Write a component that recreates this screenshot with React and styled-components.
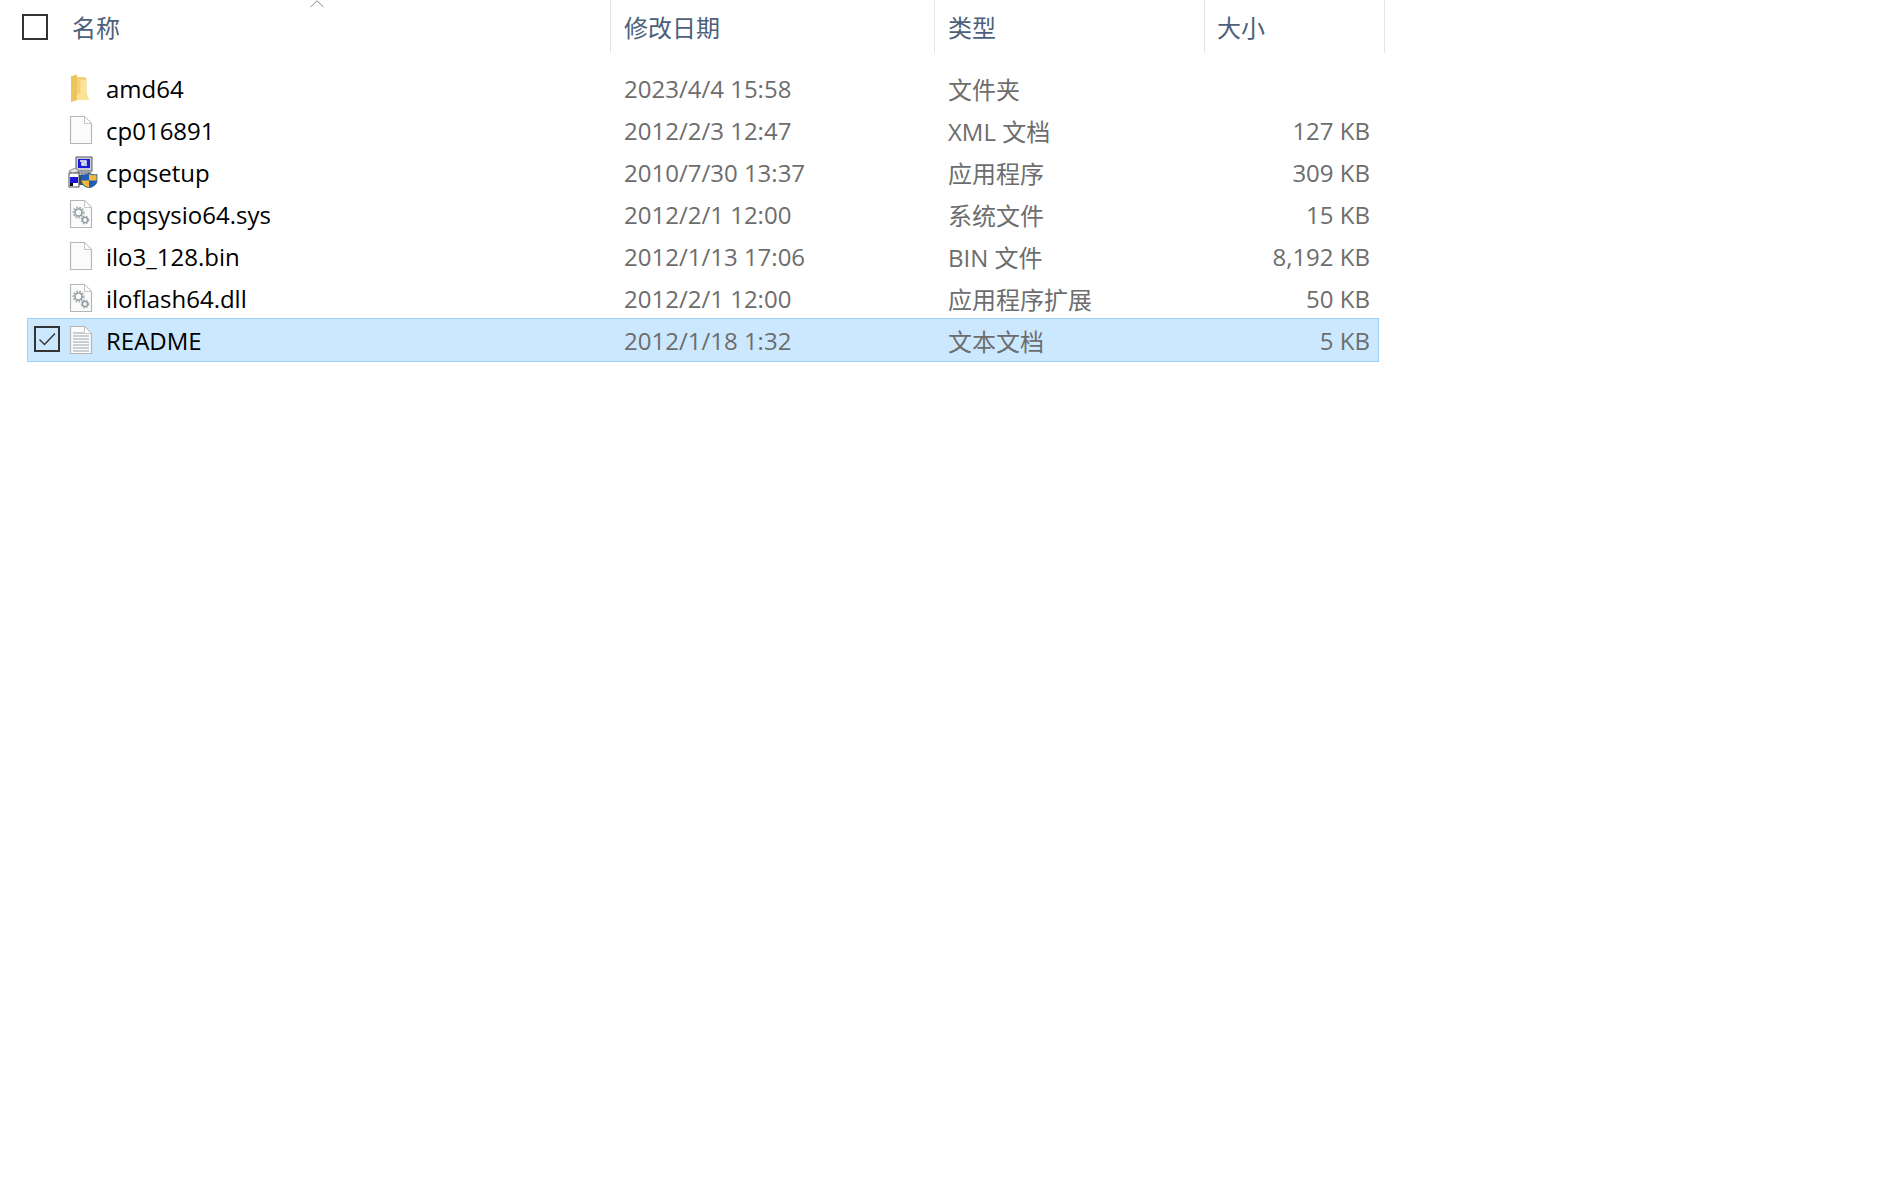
import React from "react";
import styled, { createGlobalStyle } from "styled-components";

const GlobalStyle = createGlobalStyle`
  html, body {
    margin: 0;
    padding: 0;
    background: #fff;
  }
  body {
    font-family: "Open Sans", "Noto Sans CJK SC", sans-serif;
    -webkit-font-smoothing: subpixel-antialiased;
  }
`;

const COLUMNS = "583px 324px 270px 173px";

const Page = styled.div`
  width: 1878px;
  height: 1186px;
  overflow: hidden;
  background: #fff;
`;

const Header = styled.div`
  position: relative;
  display: grid;
  grid-template-columns: 611px 324px 270px 180px;
  width: 1385px;
  height: 54px;
`;

const HeadCell = styled.div`
  display: flex;
  align-items: center;
  gap: ${(props) => props.$gap || 0}px;
  height: 53px;
  padding-left: ${(props) => props.$pad}px;
  box-sizing: border-box;
  border-right: 1px solid #e5e5e5;
  font-family: "Noto Sans CJK SC", sans-serif;
  font-size: 24px;
  color: #4c607a;
  &:first-child {
    border-right: 1px solid #e5e5e5;
  }
`;

const HeadBox = styled.span`
  display: block;
  width: 26px;
  height: 26px;
  box-sizing: border-box;
  border: 2px solid #333;
`;

const SortCaret = styled.svg`
  position: absolute;
  left: 310px;
  top: 0;
`;

const List = styled.div`
  margin: 13px 0 0 28px;
  width: 1350px;
`;

const Row = styled.div`
  position: relative;
  display: grid;
  grid-template-columns: ${COLUMNS};
  align-items: center;
  height: 42px;
  font-size: 24px;
  background: ${(props) => (props.$selected ? "#cce8ff" : "transparent")};
  outline: ${(props) => (props.$selected ? "1px solid #99d1ff" : "none")};
`;

const NameCell = styled.div`
  display: flex;
  align-items: center;
  color: #000;
  padding-left: 78px;
  height: 100%;
`;

const IconSlot = styled.span`
  position: absolute;
  left: ${(props) => props.$left}px;
  top: 0;
  height: 42px;
  display: flex;
  align-items: center;
`;

const Cell = styled.div`
  color: #6d6d6d;
  padding-left: 13px;
  white-space: nowrap;
`;

const TypeCell = styled(Cell)`
  font-family: "Open Sans", "Noto Sans CJK SC", sans-serif;
`;

const SizeCell = styled(Cell)`
  text-align: right;
  padding: 0 8px 0 0;
`;

const RowCheck = styled.span`
  position: absolute;
  left: 6px;
  top: 7px;
  width: 26px;
  height: 26px;
  box-sizing: border-box;
  border: 2px solid #333;
  display: flex;
  align-items: center;
  justify-content: center;
`;

const FolderIcon = () => (
  <svg width="24" height="30" viewBox="0 0 24 30">
    <path d="M3 3.5 L9 1.5 V4 H17 L18.5 6 V20 L21 27 H9 L3 29 Z" fill="#f3d377" />
    <path d="M9 1.5 L3 3.5 V29 L9 27 Z" fill="#eec45c" />
    <path d="M9 21 L12.5 21 V7 H18 V21 L21 27 H9 Z" fill="#fbe395" />
  </svg>
);

const DocShape = ({ children }) => (
  <svg width="24" height="30" viewBox="0 0 24 30">
    <path
      d="M1.5 1.5 H15.5 L22.5 8.5 V28.5 H1.5 Z"
      fill="#fafbfb"
      stroke="#b6b6b6"
      strokeWidth="1.2"
    />
    <path d="M15.5 1.5 V8.5 H22.5 Z" fill="#fff" stroke="#c4c4c4" strokeWidth="1" />
    {children}
  </svg>
);

const Gear = ({ x, y, r }) => (
  <g>
    <circle
      cx={x}
      cy={y}
      r={r}
      fill="none"
      stroke="#a4acb2"
      strokeWidth={r * 0.75}
      strokeDasharray="1.6 1"
      opacity="0.9"
    />
    <circle cx={x} cy={y} r={r * 0.8} fill="none" stroke="#8e979d" strokeWidth="1.2" />
    <circle cx={x} cy={y} r={r * 0.28} fill="#fff" />
  </g>
);

const GearDoc = () => (
  <DocShape>
    <Gear x={9.5} y={13.5} r={4.4} />
    <Gear x={16} y={21} r={3.2} />
  </DocShape>
);

const TextDoc = () => (
  <DocShape>
    {[8, 11, 14, 17, 20, 23, 26].map((y) => (
      <path key={y} d={`M4 ${y} H${y < 10 ? 15 : 20}`} stroke="#9ea3a8" strokeWidth="1" />
    ))}
  </DocShape>
);

const SetupIcon = () => (
  <svg width="32" height="32" viewBox="0 0 32 32">
    <rect x="10" y="1" width="16" height="14" fill="#c9ccd2" stroke="#5a5f68" strokeWidth="1" />
    <rect x="12" y="3" width="12" height="9" fill="#1b1bd6" />
    <path d="M14 5 H20 V7 H16 V9 H21" fill="none" stroke="#fff" strokeWidth="1.4" />
    <rect x="12" y="15" width="13" height="3" fill="#9a9da3" />
    <path d="M3 15 L9 12 L13 15 L7 18 Z" fill="#e7e7e7" stroke="#777" strokeWidth="0.8" />
    <rect x="3" y="17" width="10" height="14" fill="#fff" stroke="#222" strokeWidth="0.8" />
    <rect x="4" y="21" width="8" height="6" fill="#1a1ad0" />
    <rect x="4" y="27" width="3" height="3" fill="#111" />
    <rect x="13" y="19" width="8" height="10" fill="#4a4d55" />
    <path d="M23 17 C25 18.5 28 19 31 18.5 V25 C31 28.5 27 31 23 32 C19 31 15 28.5 15 25 V18.5 C18 19 21 18.5 23 17 Z" fill="#1d5fb8" stroke="#3b4a66" strokeWidth="0.6" />
    <path d="M23 18 V24.5 H30.5 V19.2 C27.5 19.5 25 19 23 18 Z" fill="#f4b73a" />
    <path d="M23 24.5 V31.5 C19.5 30.5 15.8 28 15.6 24.5 Z" fill="#f4b73a" />
  </svg>
);

const files = [
  { name: "amd64", date: "2023/4/4 15:58", type: "文件夹", size: "", icon: <FolderIcon />, left: 40 },
  { name: "cp016891", date: "2012/2/3 12:47", type: "XML 文档", size: "127 KB", icon: <DocShape />, left: 41 },
  { name: "cpqsetup", date: "2010/7/30 13:37", type: "应用程序", size: "309 KB", icon: <SetupIcon />, left: 38 },
  { name: "cpqsysio64.sys", date: "2012/2/1 12:00", type: "系统文件", size: "15 KB", icon: <GearDoc />, left: 41 },
  { name: "ilo3_128.bin", date: "2012/1/13 17:06", type: "BIN 文件", size: "8,192 KB", icon: <DocShape />, left: 41 },
  { name: "iloflash64.dll", date: "2012/2/1 12:00", type: "应用程序扩展", size: "50 KB", icon: <GearDoc />, left: 41 },
  { name: "README", date: "2012/1/18 1:32", type: "文本文档", size: "5 KB", icon: <TextDoc />, left: 41, selected: true },
];

const App = () => {
  return (
    <Page>
      <GlobalStyle />
      <Header>
        <HeadCell $pad={22} $gap={24}>
          <HeadBox />
          名称
        </HeadCell>
        <HeadCell $pad={13}>修改日期</HeadCell>
        <HeadCell $pad={13}>类型</HeadCell>
        <HeadCell $pad={12}>大小</HeadCell>
        <SortCaret width="14" height="8" viewBox="0 0 14 8">
          <path d="M0.5 7 L7 0.8 L13.5 7" fill="none" stroke="#8a8a8a" strokeWidth="1" />
        </SortCaret>
      </Header>
      <List>
        {files.map((file) => (
          <Row key={file.name} $selected={file.selected}>
            {file.selected && (
              <RowCheck>
                <svg width="20" height="16" viewBox="0 0 20 16">
                  <path d="M2.5 8.5 L7.5 13.5 L18 2.5" fill="none" stroke="#333" strokeWidth="1.4" />
                </svg>
              </RowCheck>
            )}
            <IconSlot $left={file.left}>{file.icon}</IconSlot>
            <NameCell>{file.name}</NameCell>
            <Cell>{file.date}</Cell>
            <TypeCell>{file.type}</TypeCell>
            <SizeCell>{file.size}</SizeCell>
          </Row>
        ))}
      </List>
    </Page>
  );
};

export default App;
